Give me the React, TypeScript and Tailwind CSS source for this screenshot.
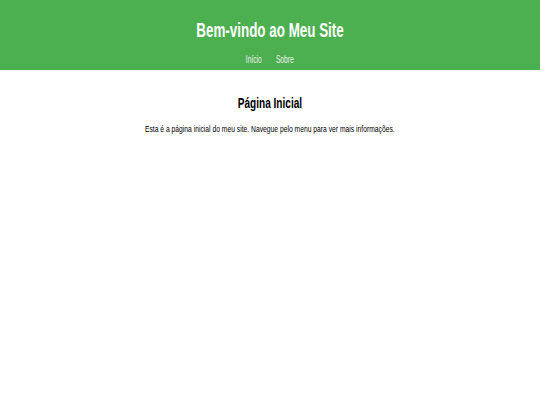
export default function App() {
  return (
    <div className="min-h-screen bg-white text-center font-['Liberation_Sans',Arial,sans-serif]">
      <header className="bg-[#4caf50] text-white h-[70px] flex flex-col items-center">
        <h1 className="text-[20px] font-bold leading-none mt-[20px] scale-x-[0.67]">Bem-vindo ao Meu Site</h1>
        <nav className="flex gap-[21px] mt-[15px] text-[10px] leading-none scale-x-[0.67]">
          <a href="#" className="text-[#eeeeee]">Início</a>
          <a href="#" className="text-[#eeeeee]">Sobre</a>
        </nav>
      </header>
      <main className="flex flex-col items-center pt-[25px]">
        <h2 className="text-[15px] font-bold leading-none text-black scale-x-[0.67]">Página Inicial</h2>
        <p className="text-[9.5px] leading-none mt-[14px] text-black scale-x-[0.71]">
          Esta é a página inicial do meu site. Navegue pelo menu para ver mais informações.
        </p>
      </main>
    </div>
  );
}
